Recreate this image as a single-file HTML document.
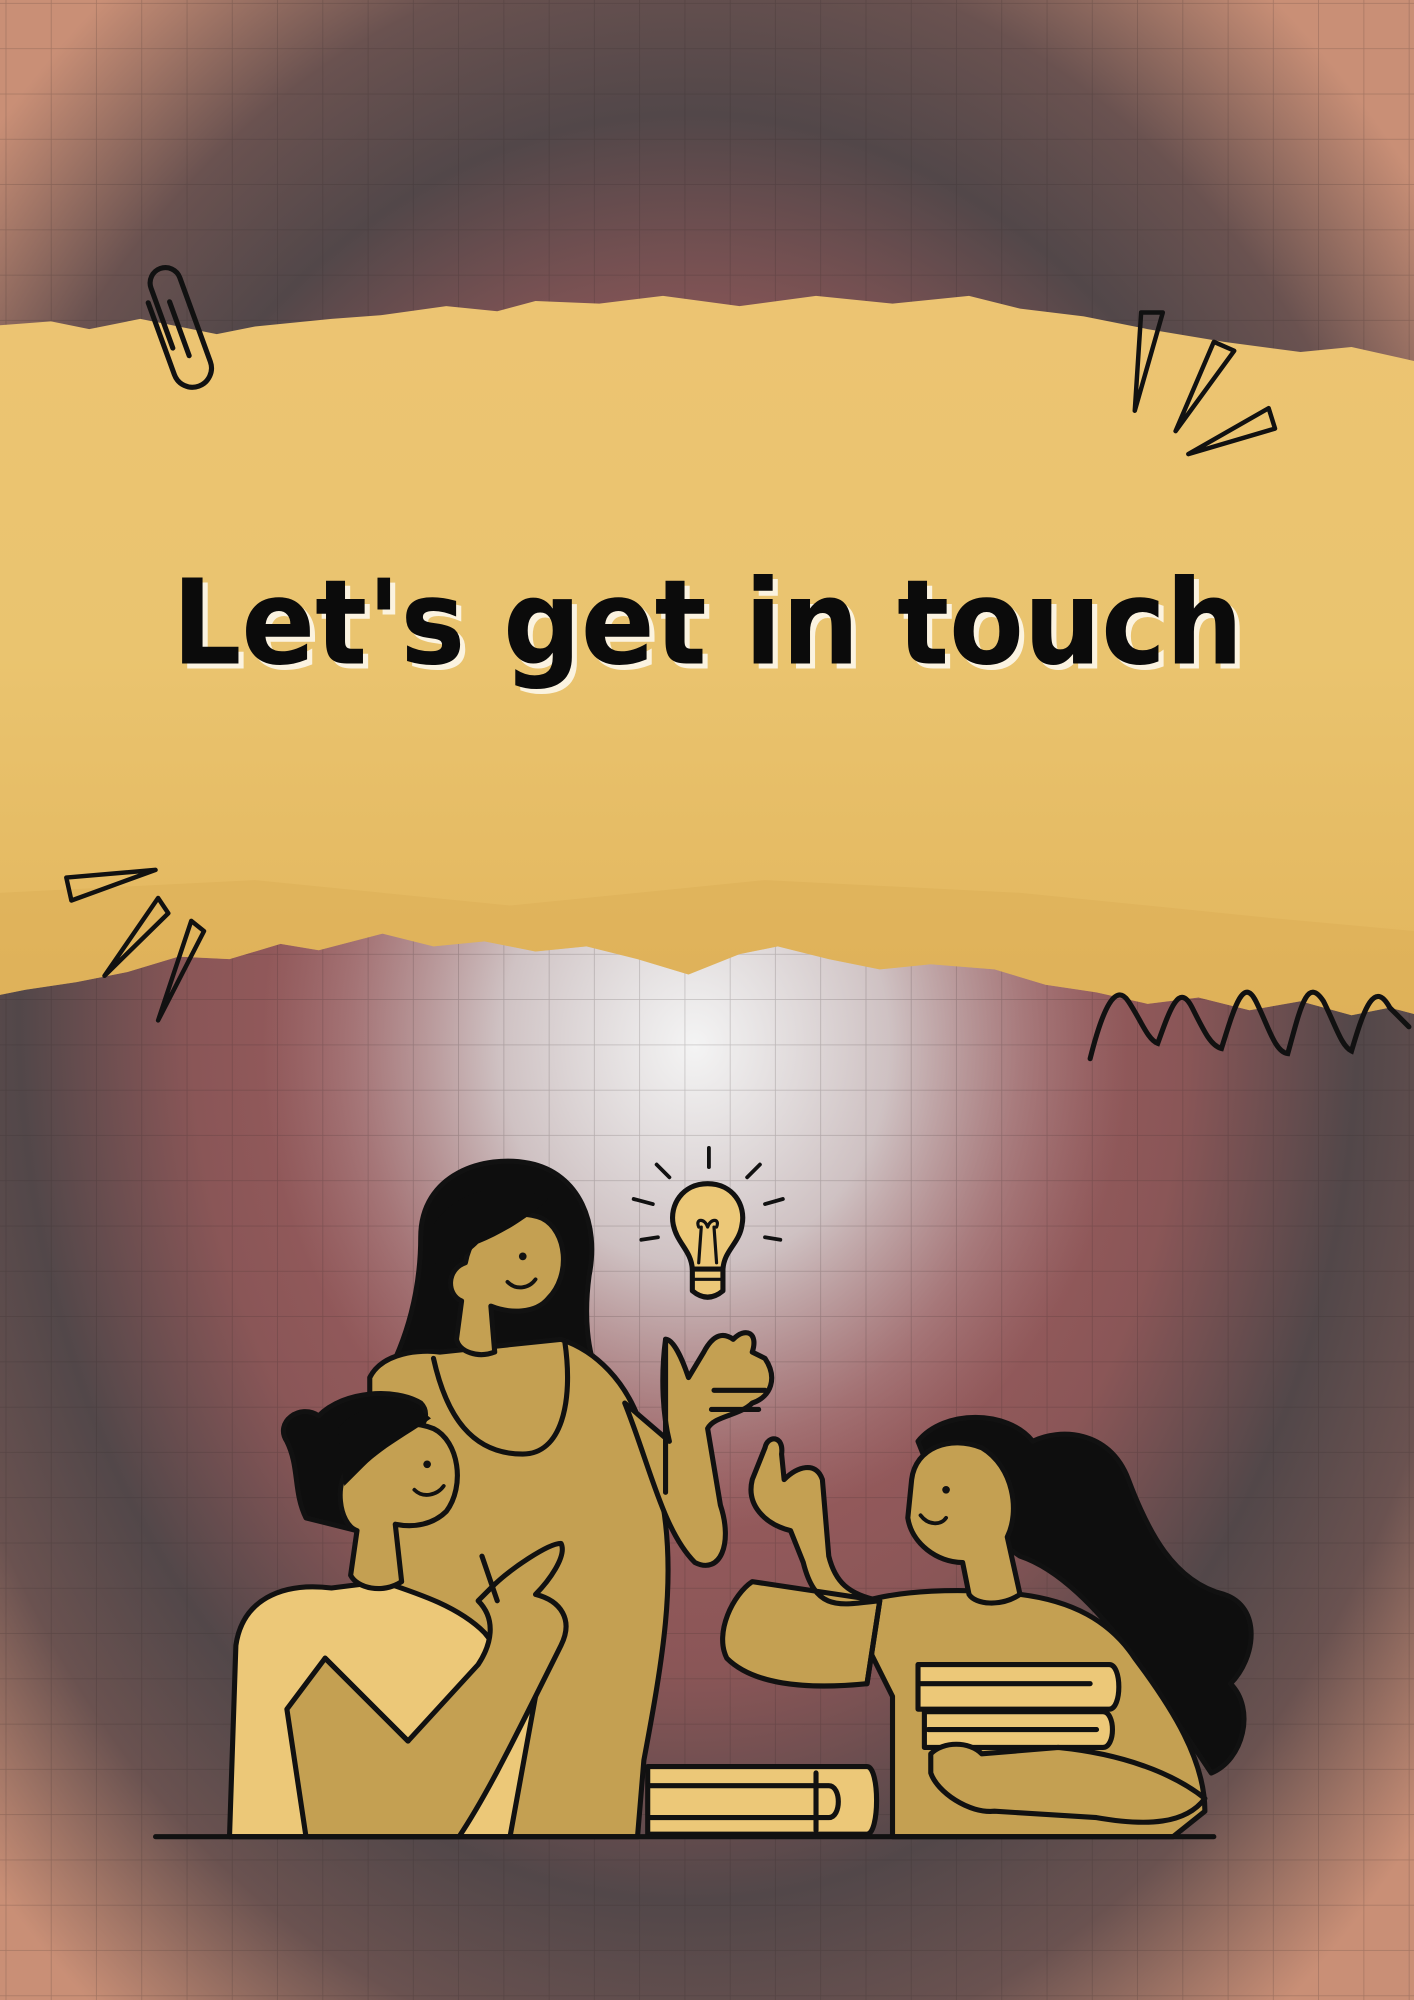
<!DOCTYPE html>
<html><head><meta charset="utf-8">
<style>
html,body{margin:0;padding:0;width:1414px;height:2000px;overflow:hidden;background:#6b4f4f}
svg{display:block}
</style></head>
<body>
<svg width="1414" height="2000" viewBox="0 0 1109 1568" preserveAspectRatio="none" xmlns="http://www.w3.org/2000/svg">
<defs>
<radialGradient id="bg" cx="540" cy="790" r="1000" gradientUnits="userSpaceOnUse" gradientTransform="translate(540 790) scale(0.75 1) translate(-540 -790)">
<stop offset="0" stop-color="#c8b6b7"/>
<stop offset="0.2" stop-color="#a77072"/>
<stop offset="0.35" stop-color="#985b5d"/>
<stop offset="0.52" stop-color="#8a5657"/>
<stop offset="0.7" stop-color="#524749"/>
<stop offset="0.83" stop-color="#6a5250"/>
<stop offset="1" stop-color="#c98f76"/>
</radialGradient>
<radialGradient id="glow" cx="0.5" cy="0.5" r="0.5">
<stop offset="0" stop-color="#f4f4f4" stop-opacity="1"/>
<stop offset="0.45" stop-color="#d6d0d1" stop-opacity="0.85"/>
<stop offset="1" stop-color="#b09092" stop-opacity="0"/>
</radialGradient>
<pattern id="grid" width="35.5" height="35.5" patternUnits="userSpaceOnUse" x="5" y="3">
<path d="M35.5 0V35.5M0 35.5H35.5" fill="none" stroke="#2a2022" stroke-opacity="0.22" stroke-width="1.2"/>
</pattern>
<linearGradient id="paper" x1="0" y1="0" x2="0" y2="1">
<stop offset="0" stop-color="#ecc472"/>
<stop offset="0.5" stop-color="#eac46f"/>
<stop offset="1" stop-color="#e2b55c"/>
</linearGradient>
</defs>
<rect width="1109" height="1568" fill="url(#bg)"/>
<ellipse cx="545" cy="820" rx="340" ry="380" fill="url(#glow)"/>
<rect width="1109" height="1568" fill="url(#grid)"/>

<path fill="url(#paper)" d="M0 255 L40 252 70 258 110 250 170 262 200 256 260 250 300 247 350 240 390 244 420 236 470 238 520 232 580 240 640 232 700 238 760 232 800 242 850 248 900 258 960 268 1020 276 1060 272 1109 283 L1109 795 L1090 790 1060 796 1020 785 980 792 940 782 900 787 860 778 820 772 780 760 730 756 690 760 650 752 610 742 580 748 540 764 500 752 460 742 420 746 380 738 340 742 300 732 250 745 220 740 180 752 140 750 100 762 60 770 20 776 0 780 Z"/>
<path fill="#dcae55" opacity="0.5" d="M0 700 L200 690 400 710 600 690 800 700 1000 720 1109 730 L1109 795 L1090 790 1060 796 1020 785 980 792 940 782 900 787 860 778 820 772 780 760 730 756 690 760 650 752 610 742 580 748 540 764 500 752 460 742 420 746 380 738 340 742 300 732 250 745 220 740 180 752 140 750 100 762 60 770 20 776 0 780 Z"/>

<g font-family="'DejaVu Sans','Liberation Sans',sans-serif" font-weight="bold" font-size="92">
<text x="139" y="524" textLength="840" lengthAdjust="spacingAndGlyphs" fill="#fbf3e0">Let's get in touch</text>
<text x="135" y="520" textLength="840" lengthAdjust="spacingAndGlyphs" fill="#0b0b0b">Let's get in touch</text>
</g>

<g fill="none" stroke="#111" stroke-width="4" stroke-linecap="round" transform="rotate(-20 140 250)">
<path d="M128 270 V220 A12 12 0 0 1 152 220 V290 A15 15 0 0 1 122 290 V230"/>
<path d="M138 280 V235"/>
</g>

<g fill="none" stroke="#111" stroke-width="3.5" stroke-linejoin="round">
<path d="M895 245 L912 245 L890 322 Z"/>
<path d="M952 268 L968 275 L922 338 Z"/>
<path d="M995 320 L1000 336 L932 356 Z"/>
<path d="M52 688 L122 682 L56 706 Z"/>
<path d="M124 704 L132 716 L82 765 Z"/>
<path d="M150 722 L160 730 L124 800 Z"/>
</g>
<path d="M855 830 C865 790 875 770 885 785 C895 800 900 815 908 818 C918 790 925 770 935 790 C945 810 950 820 958 822 C968 790 975 765 985 785 C995 805 1000 825 1010 826 C1020 790 1025 765 1038 785 C1048 805 1052 820 1060 824 C1070 790 1078 768 1090 790 L1105 805" fill="none" stroke="#111" stroke-width="4" stroke-linecap="round"/>

<g stroke="#111" stroke-width="4" stroke-linejoin="round" stroke-linecap="round">
<g fill="none" stroke-width="3">
<path d="M556 900 V915"/><path d="M515 913 L525 923"/><path d="M596 913 L586 923"/>
<path d="M497 940 L512 944"/><path d="M614 940 L600 944"/>
<path d="M503 972 L516 970"/><path d="M612 972 L600 970"/>
</g>
<path fill="#ecc878" d="M555 928 C535 928 525 945 528 960 C531 975 542 980 543 995 L567 995 C568 980 580 975 582 960 C585 945 575 928 555 928 Z"/>
<path fill="#ecc878" d="M543 995 H567 V1012 Q555 1022 543 1012 Z"/>
<path fill="none" stroke-width="2.5" d="M548 990 L550 962 M562 990 L560 962 M548 962 C545 955 553 955 555 962 C557 955 565 955 562 962 M543 1003 H567"/>

<path fill="#0e0e0e" d="M330 970 C330 920 380 905 415 912 C455 920 470 960 462 1000 C458 1030 460 1060 470 1080 L300 1085 C320 1050 330 1010 330 970 Z"/>
<path fill="#c4a052" d="M290 1080 C300 1060 330 1058 345 1060 L440 1050 C470 1060 490 1085 500 1110 L520 1180 C530 1240 520 1300 505 1380 L500 1440 L385 1440 C350 1380 300 1300 290 1200 Z"/>
<path fill="none" d="M340 1065 C350 1110 370 1140 410 1140 C440 1140 450 1100 443 1052"/>
<path fill="#c4a052" d="M490 1100 C510 1150 520 1200 545 1225 C565 1235 575 1210 565 1180 L555 1120 C560 1110 580 1110 590 1100 C605 1095 610 1080 600 1065 L590 1060 C595 1045 585 1040 575 1050 C568 1045 560 1045 552 1060 L540 1080 C535 1065 528 1050 522 1050 C518 1080 520 1110 525 1130 Z"/>
<path fill="none" d="M522 1050 V1170 M560 1090 H600 M558 1105 H595"/>
<path fill="#c4a052" d="M365 990 C370 960 400 945 425 955 C445 965 448 1000 430 1018 C420 1030 400 1030 385 1024 L388 1060 C375 1065 360 1060 358 1050 L362 1020 C350 1015 350 995 365 990 Z"/>
<path fill="#0e0e0e" stroke="none" d="M340 960 C360 930 400 925 430 940 C420 950 400 965 375 975 C365 985 350 995 340 990 Z"/>
<circle cx="410" cy="985" r="3" fill="#111" stroke="none"/>
<path fill="none" stroke-width="3" d="M398 1005 C405 1012 415 1010 420 1003"/>

<path fill="#ecc878" d="M185 1290 C190 1255 220 1240 260 1245 L300 1240 C330 1250 360 1260 380 1280 L420 1330 L400 1440 L180 1440 Z"/>
<path fill="#c4a052" d="M255 1300 L320 1365 L375 1305 C385 1290 390 1270 375 1255 L385 1245 C400 1230 430 1210 440 1210 C445 1220 430 1240 420 1250 C440 1255 450 1270 440 1290 L420 1330 C400 1370 380 1410 360 1440 L240 1440 L225 1340 Z"/>
<path fill="none" d="M255 1300 L320 1365 M378 1220 L390 1255"/>
<path fill="#0e0e0e" d="M225 1130 C215 1115 235 1100 250 1110 C270 1090 310 1088 330 1100 C340 1110 330 1130 300 1130 C290 1150 290 1180 280 1200 L240 1190 C230 1170 235 1150 225 1130 Z"/>
<path fill="#c4a052" d="M275 1150 C280 1120 315 1110 340 1120 C360 1130 365 1165 350 1185 C340 1195 325 1198 310 1195 L315 1240 C300 1250 280 1245 275 1235 L280 1200 C265 1195 262 1160 275 1150 Z"/>
<path fill="#0e0e0e" stroke="none" d="M265 1120 C280 1100 320 1095 338 1112 C320 1125 300 1135 285 1150 L270 1165 Z"/>
<circle cx="335" cy="1148" r="3" fill="#111" stroke="none"/>
<path fill="none" stroke-width="3" d="M325 1168 C332 1175 343 1172 348 1165"/>

<path fill="#ecc878" d="M508 1385 H680 C690 1385 690 1438 680 1438 H508 Z"/>
<path fill="none" d="M510 1400 H650 C660 1400 660 1425 650 1425 H510 M640 1390 V1435"/>

<path fill="#0e0e0e" d="M720 1130 C740 1105 790 1105 810 1130 C830 1120 870 1120 885 1160 C900 1200 920 1240 960 1250 C990 1260 985 1300 965 1320 C985 1340 975 1380 950 1390 L890 1300 C860 1260 830 1230 800 1220 L740 1180 Z"/>
<path fill="#c4a052" d="M665 1260 C700 1245 760 1245 800 1250 C840 1255 870 1270 890 1300 C920 1340 945 1380 945 1420 L920 1440 L700 1440 L700 1330 Z"/>
<path fill="#c4a052" d="M690 1255 C660 1258 640 1265 630 1225 L620 1200 C600 1195 585 1180 590 1160 L600 1135 C602 1125 615 1125 613 1140 L615 1160 C625 1150 640 1145 645 1160 L650 1220 C655 1240 665 1250 690 1255 L680 1320 C630 1325 590 1320 570 1300 C560 1280 575 1250 590 1240 Z"/>
<path fill="none" d="M690 1255 L680 1320"/>
<path fill="#c4a052" d="M715 1160 C718 1135 745 1125 770 1135 C795 1150 800 1185 790 1205 L800 1250 C785 1260 765 1258 760 1250 L755 1225 C735 1225 715 1210 712 1190 Z"/>
<circle cx="742" cy="1168" r="3" fill="#111" stroke="none"/>
<path fill="none" stroke-width="3" d="M722 1188 C728 1196 738 1196 742 1190"/>
<path fill="#ecc878" d="M720 1305 H870 C880 1305 880 1340 870 1340 H720 Z"/>
<path fill="#ecc878" d="M725 1342 H865 C875 1342 875 1370 865 1370 H725 Z"/>
<path fill="none" d="M722 1320 H855 M728 1356 H860"/>
<path fill="#c4a052" d="M730 1375 C740 1365 760 1365 770 1375 L830 1370 C880 1375 920 1390 945 1410 C930 1430 900 1432 860 1425 L780 1420 C760 1422 735 1405 730 1390 Z"/>

<path d="M122 1440 H952" stroke-width="4"/>
</g>
</svg>
</body></html>
